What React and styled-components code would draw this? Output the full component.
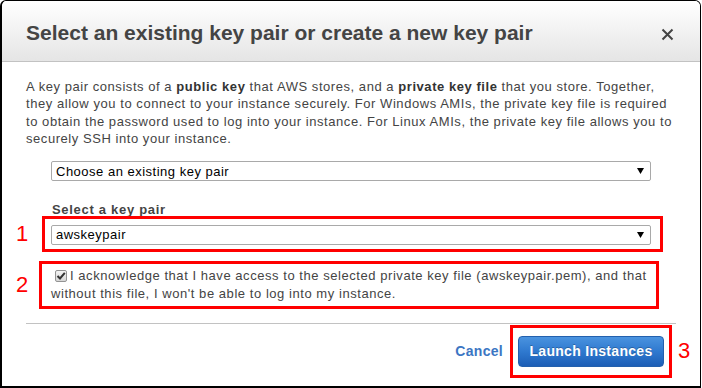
import React from 'react'
import styled, { createGlobalStyle } from 'styled-components'

const GlobalStyle = createGlobalStyle`
  html, body {
    margin: 0;
    padding: 0;
    background: #fff;
  }
  body {
    font-family: "Liberation Sans", Arial, sans-serif;
  }
`

function Arrow() {
    return (
        <svg width="7" height="6" viewBox="0 0 7 6">
            <polygon points="0,0 7,0 3.5,6" fill="#000" />
        </svg>
    )
}

function Select({ value }) {
    return (
        <SelectBox>
            <span>{value}</span>
            <Arrow />
        </SelectBox>
    )
}

export default function App() {
    return (
        <>
            <GlobalStyle />
            <Modal>
                <Header>
                    <Title>Select an existing key pair or create a new key pair</Title>
                    <Close aria-label="close">
                        <svg width="13" height="13" viewBox="0 0 13 13">
                            <path d="M1.5 1.5 L11.5 11.5 M11.5 1.5 L1.5 11.5" stroke="#444" strokeWidth="2" />
                        </svg>
                    </Close>
                </Header>

                <Body>
                    <Intro>
                        A key pair consists of a <b>public key</b> that AWS stores, and a <b>private key file</b> that you store. Together,<br />
                        they allow you to connect to your instance securely. For Windows AMIs, the private key file is required<br />
                        to obtain the password used to log into your instance. For Linux AMIs, the private key file allows you to<br />
                        securely SSH into your instance.
                    </Intro>

                    <SelectRow>
                        <Select value="Choose an existing key pair" />
                    </SelectRow>

                    <Label>Select a key pair</Label>

                    <AnnotRow $offset={-3}>
                        <Num $w={26}>1</Num>
                        <Callout $w={621} $pad="6px 9px 4px 6px">
                            <Select value="awskeypair" />
                        </Callout>
                    </AnnotRow>

                    <AnnotRow $offset={9}>
                        <Num $w={23}>2</Num>
                        <Callout $w={620} $pad="3px 5px 3px 9px">
                            <Ack>
                                <Check>
                                    <svg width="10" height="10" viewBox="0 0 10 10">
                                        <path d="M1.5 5 L4 7.5 L8.8 1.8" stroke="#333" strokeWidth="2" fill="none" />
                                    </svg>
                                </Check>
                                I acknowledge that I have access to the selected private key file (awskeypair.pem), and that<br />
                                without this file, I won't be able to log into my instance.
                            </Ack>
                        </Callout>
                    </AnnotRow>

                    <Divider />

                    <Footer>
                        <CancelLink>Cancel</CancelLink>
                        <Callout $w={162} $pad="8px 5px">
                            <LaunchButton>Launch Instances</LaunchButton>
                        </Callout>
                        <Num $w={14} $right>3</Num>
                    </Footer>
                </Body>
            </Modal>
        </>
    )
}

const Modal = styled.div`
  box-sizing: border-box;
  width: 701px;
  height: 388px;
  border: 1px solid #000;
  border-left-width: 2px;
  border-bottom-width: 2px;
  border-radius: 6px 6px 0 0;
  background: #fff;
  display: flex;
  flex-direction: column;
  overflow: hidden;
`

const Header = styled.div`
  box-sizing: border-box;
  height: 61px;
  flex: none;
  display: flex;
  justify-content: space-between;
  align-items: flex-start;
  padding: 20px 26px 0 24px;
  background: linear-gradient(to bottom, #ffffff 0%, #e5e5e5 100%);
  border-bottom: 1px solid #c2c2c2;
  border-radius: 5px 5px 0 0;
`

const Title = styled.h1`
  margin: 0;
  font-size: 21px;
  line-height: 24px;
  font-weight: bold;
  color: #444;
`

const Close = styled.div`
  width: 13px;
  height: 13px;
  margin-top: 7px;
  cursor: pointer;
  svg { display: block; }
`

const Body = styled.div`
  padding: 16px 24px 0 24px;
  color: #444;
  font-size: 13px;
  letter-spacing: 0.55px;
`

const Intro = styled.p`
  margin: 0;
  line-height: 17.33px;
  white-space: nowrap;
  b { color: #333; }
`

const SelectRow = styled.div`
  margin: 14px 0 0 25px;
`

const SelectBox = styled.div`
  box-sizing: border-box;
  width: 600px;
  height: 20px;
  border: 1px solid #a9a9a9;
  border-radius: 2px;
  background: #fff;
  display: flex;
  align-items: center;
  justify-content: space-between;
  padding: 0 6px 0 4px;
  color: #000;
  font-size: 13px;
  letter-spacing: 0.5px;
  svg { display: block; }
`

const Label = styled.div`
  margin: 20px 0 0 26px;
  font-weight: bold;
  line-height: 17.33px;
  letter-spacing: 0.7px;
  color: #444;
`

const AnnotRow = styled.div`
  display: flex;
  align-items: center;
  margin: ${({ $offset }) => $offset}px 0 0 -10px;
  position: relative;
`

const Num = styled.div`
  width: ${({ $w }) => $w}px;
  flex: none;
  color: #f00;
  font-size: 22px;
  line-height: 1;
  letter-spacing: 0;
  margin-left: ${({ $right }) => ($right ? '6px' : '0')};
`

const Callout = styled.div`
  box-sizing: border-box;
  width: ${({ $w }) => $w}px;
  flex: none;
  border: 3px solid #f00;
  padding: ${({ $pad }) => $pad};
`

const Ack = styled.div`
  line-height: 18px;
  white-space: nowrap;
  color: #444;
`

const Check = styled.span`
  box-sizing: border-box;
  display: inline-flex;
  align-items: center;
  justify-content: center;
  width: 12px;
  height: 12px;
  margin: 0 3px 0 4px;
  vertical-align: -1px;
  border: 1px solid #939393;
  border-radius: 2px;
  background: linear-gradient(to bottom, #f4f4f4, #d6d6d6);
  svg { display: block; }
`

const Divider = styled.div`
  height: 1px;
  background: #c2c2c2;
  margin-top: 14px;
`

const Footer = styled.div`
  display: flex;
  align-items: center;
  justify-content: flex-end;
  margin: 1px -24px 0 0;
  padding-right: 8px;
`

const CancelLink = styled.a`
  font-size: 14px;
  font-weight: bold;
  letter-spacing: 0.3px;
  color: #3b76c3;
  margin-right: 7px;
  cursor: pointer;
`

const LaunchButton = styled.button`
  box-sizing: border-box;
  display: block;
  width: 146px;
  height: 31px;
  padding: 0;
  border: 1px solid #2360ad;
  border-radius: 4px;
  background: linear-gradient(to bottom, #4a93df 0%, #2f79cf 50%, #1c5eb6 100%);
  color: #fff;
  font-family: "Liberation Sans", Arial, sans-serif;
  font-size: 14px;
  font-weight: bold;
  letter-spacing: 0.3px;
  text-shadow: 0 -1px 0 rgba(0, 0, 0, 0.25);
  cursor: pointer;
`
